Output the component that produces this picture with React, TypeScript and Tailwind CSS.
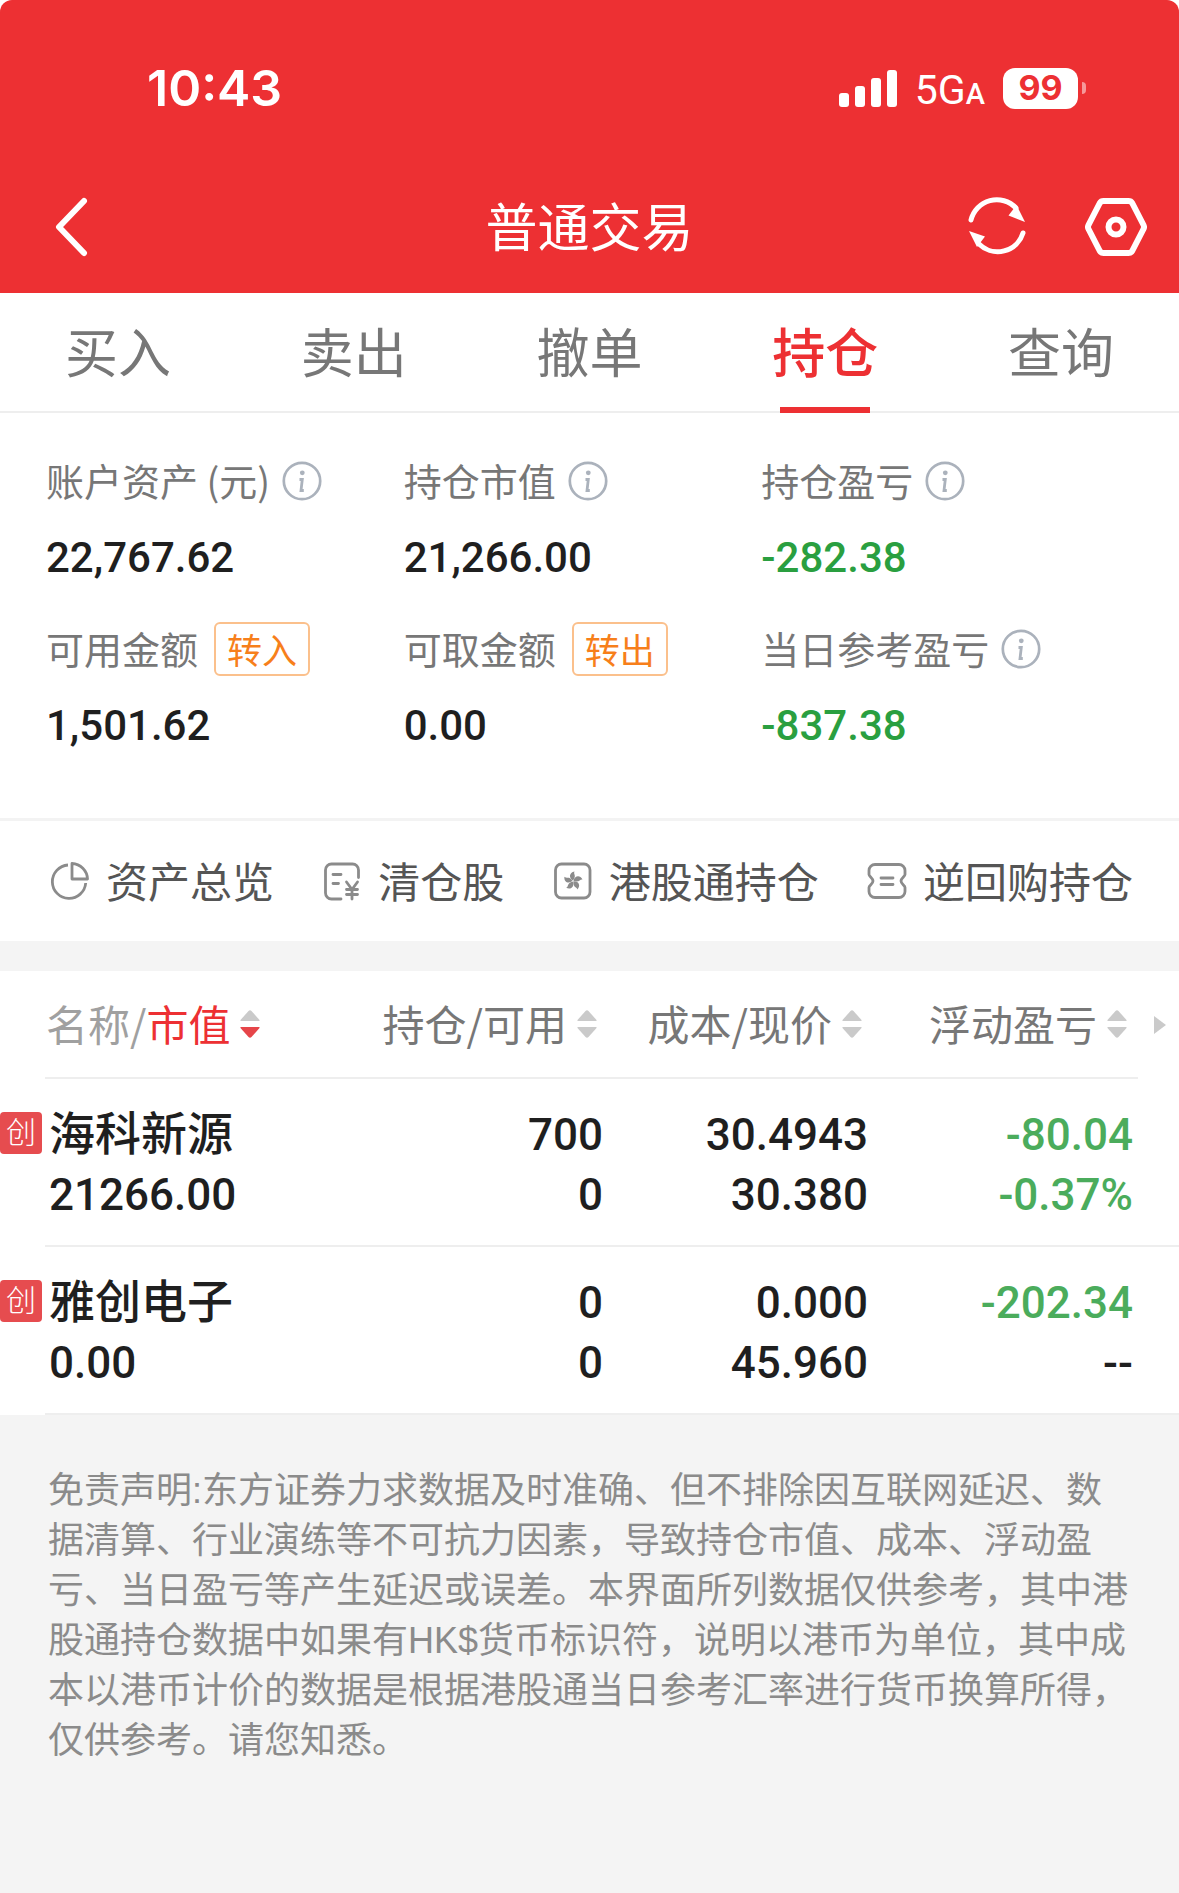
import clsx from "clsx";
import type React from "react";

const tabs = ["买入", "卖出", "撤单", "持仓", "查询"];

interface Metric {
	label: string;
	value: string;
	action?: string;
	down?: boolean;
}

const metrics: Metric[] = [
	{ label: "账户资产 (元)", value: "22,767.62" },
	{ label: "持仓市值", value: "21,266.00" },
	{ label: "持仓盈亏", value: "-282.38", down: true },
	{ label: "可用金额", value: "1,501.62", action: "转入" },
	{ label: "可取金额", value: "0.00", action: "转出" },
	{ label: "当日参考盈亏", value: "-837.38", down: true },
];

interface Holding {
	name: string;
	marketValue: string;
	cells: [string, string][];
}

const holdings: Holding[] = [
	{
		name: "海科新源",
		marketValue: "21266.00",
		cells: [
			["700", "0"],
			["30.4943", "30.380"],
			["-80.04", "-0.37%"],
		],
	},
	{
		name: "雅创电子",
		marketValue: "0.00",
		cells: [
			["0", "0"],
			["0.000", "45.960"],
			["-202.34", "--"],
		],
	},
];

function StatusBar() {
	return (
		<div className="flex h-44 items-center justify-between pr-[93px] pl-[147px]">
			<div className="font-['Inter',sans-serif] text-[50px] leading-none font-semibold">
				10:43
			</div>
			<div className="flex items-center">
				<svg width="58" height="38" viewBox="0 0 58 38" fill="currentColor">
					<rect x="0" y="24" width="10" height="14" rx="3" />
					<rect x="16" y="17" width="10" height="21" rx="3" />
					<rect x="32" y="9" width="10" height="29" rx="3" />
					<rect x="48" y="1" width="10" height="37" rx="3" />
				</svg>
				<div className="ml-[18px] flex items-baseline pt-1 font-['Roboto',sans-serif] leading-none">
					<span className="text-[41px]">5G</span>
					<span className="text-[29px] font-medium">A</span>
				</div>
				<div className="ml-[18px] flex h-[41px] w-[75px] items-center justify-center rounded-xl bg-white font-['Inter',sans-serif] text-[34px] leading-none font-bold text-[#ed3033]">
					99
				</div>
				<div className="ml-1 h-3 w-1 rounded-r-full bg-white/50" />
			</div>
		</div>
	);
}

function NavBar() {
	return (
		<div className="grid h-[102px] grid-cols-[1fr_auto_1fr] items-center px-8">
			<button
				type="button"
				aria-label="返回"
				className="justify-self-start pl-5"
			>
				<svg
					width="40"
					height="64"
					viewBox="0 0 40 64"
					fill="none"
					stroke="currentColor"
					strokeWidth="6"
					strokeLinecap="round"
					strokeLinejoin="round"
				>
					<path d="M32 6 7 32l25 26" />
				</svg>
			</button>
			<h1 className="pb-1 text-[52px] leading-none">普通交易</h1>
			<div className="flex items-center gap-14 justify-self-end">
				<button type="button" aria-label="刷新">
					<svg width="64" height="64" viewBox="0 0 64 64" fill="none">
						<g stroke="currentColor" strokeWidth="5" strokeLinecap="round">
							<path d="M6 25A26.5 26.5 0 0 1 51 13" />
							<path d="M58 38A26.5 26.5 0 0 1 14 49" />
						</g>
						<path
							d="M60 27 51.500 10l-8 10.500zM4 36l8 16 8-10.500z"
							fill="currentColor"
						/>
					</svg>
				</button>
				<button type="button" aria-label="设置">
					<svg
						width="62"
						height="64"
						viewBox="0 0 62 64"
						fill="none"
						stroke="currentColor"
						strokeWidth="6"
						strokeLinejoin="round"
					>
						<path d="M18.500 6h25q2.500 0 3.700 2L58.500 30q1 2 0 4L47.200 56q-1.200 2-3.700 2h-25q-2.500 0-3.700-2L3.500 34q-1-2 0-4L14.800 8Q16 6 18.500 6z" />
						<circle cx="31" cy="32" r="7.500" />
					</svg>
				</button>
			</div>
		</div>
	);
}

function InfoIcon() {
	return (
		<svg width="40" height="40" viewBox="0 0 40 40" fill="none" stroke="#abb2bc">
			<circle cx="20" cy="20" r="18.200" strokeWidth="2.700" />
			<circle cx="20.300" cy="11.800" r="2.400" fill="#abb2bc" stroke="none" />
			<path d="M17.500 18.500h2.800L19 29.500h2.800" strokeWidth="2.800" />
		</svg>
	);
}

function AccountSummary() {
	return (
		<section className="grid grid-cols-3 gap-y-[38px] border-b-3 border-[#f3f3f3] pt-[39px] pr-[60px] pb-[68px] pl-[46px]">
			{metrics.map((m) => (
				<div key={m.label}>
					<div className="flex h-[58px] items-center text-[38px] leading-none text-[#777]">
						<span className="pb-0.5 whitespace-nowrap">{m.label}</span>
						{m.action ? (
							<button
								type="button"
								className="ml-4 h-[54px] w-24 rounded-md border-2 border-[#fbc08c] pb-0.5 text-[35px] leading-none text-[#f77f1b]"
							>
								{m.action}
							</button>
						) : (
							<button
								type="button"
								aria-label={`${m.label}说明`}
								className="ml-3"
							>
								<InfoIcon />
							</button>
						)}
					</div>
					<div
						className={clsx(
							"mt-[23px] mb-[-1px] font-['Roboto',sans-serif] text-[42px] leading-[50px] font-medium",
							m.down ? "text-[#2a9f40]" : "text-[#1f1f1f]",
						)}
					>
						{m.value}
					</div>
				</div>
			))}
		</section>
	);
}

function LinkIcon({ children }: { children: React.ReactNode }) {
	return (
		<svg
			width="40"
			height="40"
			viewBox="0 0 40 40"
			fill="none"
			stroke="#8b8b8b"
			strokeWidth="2.800"
			strokeLinecap="round"
			strokeLinejoin="round"
		>
			{children}
		</svg>
	);
}

const links = [
	{
		label: "资产总览",
		icon: (
			<LinkIcon>
				<path d="M18 4A16.700 16.700 0 1 0 35.700 22" strokeLinecap="butt" />
				<path d="M22 2.500V18h15.500A16 16 0 0 0 22 2.500z" />
			</LinkIcon>
		),
	},
	{
		label: "清仓股",
		icon: (
			<LinkIcon>
				<path d="M19 38H9.500A6 6 0 0 1 3.500 32V9a6 6 0 0 1 6-6h21a6 6 0 0 1 6 6v7.500" />
				<path d="M11 13.500h8M11 22.500h5.500M24.500 21l5.500 7.500 5.500-7.500M30 28.500V38M24.500 28.500h11M24.500 33.500h11" />
			</LinkIcon>
		),
	},
	{
		label: "港股通持仓",
		icon: (
			<LinkIcon>
				<rect x="2.500" y="3" width="34.500" height="34" rx="6" />
				<g fill="#8b8b8b" stroke="none">
					{[0, 72, 144, 216, 288].map((deg) => (
						<path
							key={deg}
							d="M20 19.500C15.500 17 16 11.500 21.500 10.500 20 13 24 14.500 20 19.500z"
							transform={`rotate(${deg} 20 20)`}
						/>
					))}
				</g>
			</LinkIcon>
		),
	},
	{
		label: "逆回购持仓",
		icon: (
			<LinkIcon>
				<path d="M8 3.500h24a6 6 0 0 1 6 6v4c0 1.800-4 3.500-4 6.500s4 4.700 4 6.500v4a6 6 0 0 1-6 6H8a6 6 0 0 1-6-6v-4c0-1.800 4-3.500 4-6.500s-4-4.700-4-6.500v-4a6 6 0 0 1 6-6z" />
				<path d="M14 17h12M14 23.500h12" />
			</LinkIcon>
		),
	},
];

function QuickLinks() {
	return (
		<nav className="flex h-[120px] items-center justify-between pr-[46px] pl-[50px]">
			{links.map(({ label, icon }) => (
				<a
					key={label}
					href="#"
					className="flex items-center gap-4 text-[42px] leading-none whitespace-nowrap text-[#555]"
				>
					{icon}
					<span className="pb-0.5">{label}</span>
				</a>
			))}
		</nav>
	);
}

function SortIcon({ active }: { active?: boolean }) {
	return (
		<svg width="20" height="30" viewBox="0 0 20 30" fill="#cacaca">
			<path d="M.5 12v-1L8.500 2q1.500-1.500 3 0l8 9v1z" />
			<path
				d="M.5 18v1l8 9q1.500 1.500 3 0l8-9v-1z"
				fill={active ? "#e64549" : undefined}
			/>
		</svg>
	);
}

function HoldingsTable() {
	return (
		<table className="w-full table-fixed border-separate border-spacing-0 bg-white">
			<colgroup>
				<col className="w-[45px]" />
				<col />
				<col className="w-[265px]" />
				<col className="w-[265px]" />
				<col className="w-[265px]" />
				<col className="w-[41px]" />
			</colgroup>
			<thead>
				<tr className="h-[108px] text-[42px] leading-none text-[#777] *:p-0 *:font-normal">
					<td />
					<th scope="col" className="border-b-2 border-[#eee]">
						<button type="button" className="flex items-center gap-2.5 pl-px">
							<span className="pb-0.5 text-[#a0a0a0]">
								名称/<span className="text-[#ed3033]">市值</span>
							</span>
							<SortIcon active />
						</button>
					</th>
					{["持仓/可用", "成本/现价", "浮动盈亏"].map((title) => (
						<th key={title} scope="col" className="border-b-2 border-[#eee]">
							<button
								type="button"
								className="ml-auto flex items-center gap-2.5 pr-[11px] whitespace-nowrap"
							>
								<span className="pb-0.5">{title}</span>
								<SortIcon />
							</button>
						</th>
					))}
					<td>
						<button type="button" aria-label="更多列" className="ml-4 block">
							<svg width="12" height="18" viewBox="0 0 12 18" fill="#cacaca">
								<path d="M0 0l12 9-12 9z" />
							</svg>
						</button>
					</td>
				</tr>
			</thead>
			<tbody className="font-['Roboto','Noto_Sans_CJK_SC',sans-serif] text-[44px] leading-[60px] font-medium text-[#1f1f1f]">
				{holdings.map((h) => (
					<tr key={h.name}>
						<td className="p-0 pt-[33px] align-top">
							<div className="flex size-[42px] items-center justify-center rounded-sm bg-[#e64c4f] text-[30px] leading-none font-light text-white">
								创
							</div>
						</td>
						<td className="border-b-2 border-[#eee] pt-[26px] pb-5 pl-1">
							<div className="h-[60px] text-[46px] leading-[58px]">
								{h.name}
							</div>
							<div>{h.marketValue}</div>
						</td>
						{h.cells.map((lines, col) => (
							<td
								key={col}
								className="border-b-2 border-[#eee] pt-[26px] pr-[5px] pb-5 text-right"
							>
								{lines.map((text, i) => (
									<div
										key={i}
										className={clsx(/^-\d/.test(text) && "text-[#4bac5c]")}
									>
										{text}
									</div>
								))}
							</td>
						))}
						<td className="border-b-2 border-[#eee]" />
					</tr>
				))}
			</tbody>
		</table>
	);
}

export default function App() {
	return (
		<div
			lang="zh-CN"
			className="min-h-screen bg-[#f4f4f4] font-['Noto_Sans_CJK_SC',sans-serif]"
		>
			<div className="bg-white">
				<header className="rounded-t-xl bg-[#ed3033] pb-[15px] text-white">
					<StatusBar />
					<NavBar />
				</header>
				<nav className="grid h-[120px] grid-cols-5 border-b-2 border-[#eee]">
					{tabs.map((tab) => (
						<button
							key={tab}
							type="button"
							className={clsx(
								"relative pb-1 text-[53px] leading-none",
								tab === "持仓" ? "font-medium text-[#ed3033]" : "text-[#777]",
							)}
						>
							{tab}
							{tab === "持仓" && (
								<span className="absolute -bottom-0.5 left-1/2 h-1.5 w-[90px] -translate-x-1/2 bg-[#ed3033]" />
							)}
						</button>
					))}
				</nav>
				<AccountSummary />
				<QuickLinks />
			</div>
			<main className="mt-[30px]">
				<HoldingsTable />
				<p className="px-12 pt-[51px] pb-12 font-['Liberation_Sans','Noto_Sans_CJK_SC',sans-serif] text-[36px] leading-[50px] text-[#8b8b8b]">
					免责声明:东方证券力求数据及时准确、但不排除因互联网延迟、数据清算、行业演练等不可抗力因素，导致持仓市值、成本、浮动盈亏、当日盈亏等产生延迟或误差。本界面所列数据仅供参考，其中港股通持仓数据中如果有HK$货币标识符，说明以港币为单位，其中成本以港币计价的数据是根据港股通当日参考汇率进行货币换算所得，仅供参考。请您知悉。
				</p>
			</main>
		</div>
	);
}
